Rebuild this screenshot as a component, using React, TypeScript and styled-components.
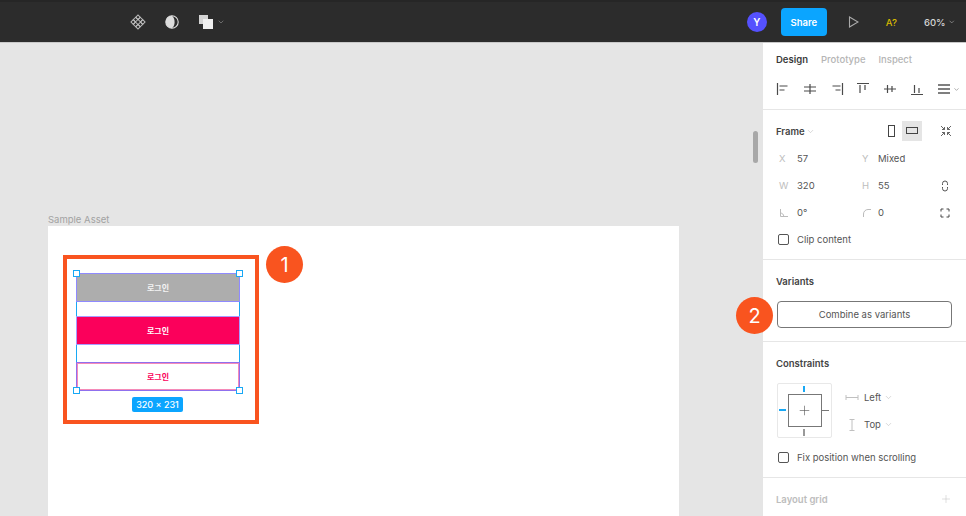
import React from 'react'
import styled, { createGlobalStyle } from 'styled-components'
import { ChevronDown, Plus } from 'lucide-react'

const GlobalStyle = createGlobalStyle`
  html, body {
    margin: 0;
    padding: 0;
    height: 100%;
    overflow: hidden;
    background: #e5e5e5;
  }
  body {
    font-family: Inter, "Liberation Sans", "Noto Sans CJK KR", sans-serif;
    -webkit-font-smoothing: antialiased;
  }
`

const Page = styled.div`
  width: 966px;
  height: 516px;
  display: flex;
  flex-direction: column;
  overflow: hidden;
`

const TopBar = styled.header`
  height: 43px;
  flex: none;
  display: flex;
  align-items: center;
  background: #2c2c2c;
  border-top: 2px solid #262626;
  border-bottom: 1px solid #c9c9c9;
  box-sizing: border-box;
  color: #e4e4e4;
`

const ToolGroup = styled.div`
  display: flex;
  align-items: center;
  margin-left: 130px;
  gap: 18px;
`

const ToolButton = styled.div`
  display: flex;
  align-items: center;
  gap: 3px;
  height: 16px;
`

const BarRight = styled.div`
  margin-left: auto;
  display: flex;
  align-items: center;
`

const Avatar = styled.div`
  width: 20px;
  height: 20px;
  border-radius: 50%;
  background: #5551ff;
  color: #fff;
  font-size: 10px;
  font-weight: 600;
  display: flex;
  align-items: center;
  justify-content: center;
`

const ShareButton = styled.div`
  width: 46px;
  height: 28px;
  margin-left: 14px;
  border-radius: 4px;
  background: #0ba5ff;
  color: #fff;
  font-size: 9.5px;
  font-weight: 600;
  display: flex;
  align-items: center;
  justify-content: center;
`

const PlayWrap = styled.div`
  margin-left: 20px;
  width: 12px;
  display: flex;
`

const MissingFonts = styled.div`
  margin-left: 27px;
  color: #d6b900;
  font-size: 9.5px;
  font-weight: 500;
`

const Zoom = styled.div`
  margin-left: 27px;
  margin-right: 11px;
  width: 31px;
  display: flex;
  align-items: center;
  gap: 2px;
  font-size: 9.5px;
  font-weight: 500;
  color: #d4d4d4;
`

const Body = styled.div`
  position: relative;
  flex: 1;
  min-height: 0;
  display: flex;
`

const Canvas = styled.main`
  position: relative;
  flex: 1;
  background: #e5e5e5;
  overflow: hidden;
`

const FrameLabel = styled.div`
  position: absolute;
  left: 48px;
  top: 171px;
  font-size: 9.5px;
  color: #a2a2a2;
`

const ArtBoard = styled.div`
  position: absolute;
  left: 48px;
  top: 183px;
  width: 631px;
  height: 300px;
  background: #fff;
`

const Annotation = styled.div`
  position: absolute;
  left: 15px;
  top: 29px;
  width: 196px;
  height: 169px;
  box-sizing: border-box;
  border: 4px solid #f9541f;
`

const Selection = styled.div`
  position: absolute;
  left: 9px;
  top: 14px;
  width: 164px;
  height: 118px;
  box-sizing: border-box;
  border-left: 1px solid #18a8f5;
  border-right: 1px solid #18a8f5;
  display: flex;
  flex-direction: column;
`

const LoginButton = styled.div<{ $bg: string; $fg: string; $gap: number; $line: string; $inner?: string }>`
  flex: none;
  height: 29px;
  margin: 0 -1px ${p => p.$gap}px;
  box-sizing: border-box;
  background: ${p => p.$bg};
  color: ${p => p.$fg};
  border: 1px solid ${p => p.$line};
  box-shadow: inset 0 0 0 1px ${p => p.$inner ?? 'transparent'};
  font-size: 8px;
  font-weight: 700;
  display: flex;
  align-items: center;
  justify-content: center;
`

const Handle = styled.span<{ $x: 'left' | 'right'; $y: 'top' | 'bottom' }>`
  position: absolute;
  ${p => p.$x}: -4px;
  ${p => p.$y}: -3px;
  width: 5px;
  height: 5px;
  background: #fff;
  border: 1px solid #18a8f5;
`

const SizeBadge = styled.div`
  position: absolute;
  left: 65px;
  top: 138px;
  width: 51px;
  height: 15px;
  border-radius: 2px;
  background: #0ba5ff;
  color: #fff;
  font-size: 9px;
  font-weight: 500;
  display: flex;
  align-items: center;
  justify-content: center;
`

const Marker = styled.div<{ $left: number; $top: number }>`
  position: absolute;
  left: ${p => p.$left}px;
  top: ${p => p.$top}px;
  width: 37px;
  height: 37px;
  border-radius: 50%;
  background: #f9541f;
  color: #fff;
  font-size: 20px;
  display: flex;
  align-items: center;
  justify-content: center;
  z-index: 2;
`

const ScrollThumb = styled.div`
  position: absolute;
  left: 753px;
  top: 88px;
  width: 5px;
  height: 32px;
  border-radius: 3px;
  background: #a8a8a8;
`

const Sidebar = styled.aside`
  width: 203px;
  flex: none;
  background: #fff;
  color: #333;
  font-size: 9.5px;
`

const Section = styled.section<{ $height: number }>`
  height: ${p => p.$height}px;
  box-sizing: border-box;
  padding: 0 14px 0 13px;
  border-bottom: 1px solid #e6e6e6;
  &:last-child {
    border-bottom: 0;
  }
`

const Tabs = styled.div`
  display: flex;
  gap: 13px;
  padding-top: 10px;
  height: 13px;
  line-height: 13px;
`

const Tab = styled.span<{ $active?: boolean }>`
  font-weight: ${p => (p.$active ? 600 : 500)};
  color: ${p => (p.$active ? '#3a3a3a' : '#b5b5b5')};
`

const AlignRow = styled.div`
  display: flex;
  align-items: center;
  justify-content: space-between;
  margin-top: 16px;
  margin-right: -8px;
  color: #4a4a4a;
`

const TitleRow = styled.div`
  display: flex;
  align-items: center;
  height: 14px;
  padding-top: 14px;
`

const SectionTitle = styled.span<{ $muted?: boolean }>`
  font-weight: 600;
  color: ${p => (p.$muted ? '#bdbdbd' : '#444')};
`

const OrientGroup = styled.div`
  margin-left: auto;
  margin-right: -4px;
  display: flex;
  align-items: center;
`

const OrientButton = styled.div<{ $active?: boolean; $gap?: number }>`
  width: 20px;
  height: 20px;
  margin-left: ${p => p.$gap ?? 0}px;
  display: flex;
  align-items: center;
  justify-content: center;
  background: ${p => (p.$active ? '#e5e5e5' : 'transparent')};
`

const FieldGrid = styled.div`
  display: grid;
  grid-template-columns: 18px 65px 16px 1fr 12px;
  grid-auto-rows: 27px;
  align-items: center;
  margin: 7px 1px 0 3px;
  color: #555;
`

const FieldLabel = styled.span`
  color: #bdbdbd;
`

const CheckRow = styled.label<{ $top: number }>`
  display: flex;
  align-items: center;
  gap: 8px;
  margin: ${p => p.$top}px 0 0 2px;
  color: #555;
`

const CheckBox = styled.span`
  width: 9px;
  height: 9px;
  border: 1px solid #555;
  border-radius: 2px;
  flex: none;
`

const CombineButton = styled.div`
  height: 27px;
  margin: 13px 0 0 1px;
  box-sizing: border-box;
  border: 1px solid #777;
  border-radius: 4px;
  display: flex;
  align-items: center;
  justify-content: center;
  color: #555;
`

const ConstraintRow = styled.div`
  display: flex;
  margin: 13px 0 0 1px;
`

const ConstraintBox = styled.div`
  position: relative;
  width: 55px;
  height: 55px;
  box-sizing: border-box;
  border: 1px solid #e8e8e8;
  border-radius: 2px;
  display: flex;
  align-items: center;
  justify-content: center;
  flex: none;
  color: #555;
`

const ConstraintInner = styled.div`
  width: 34px;
  height: 33px;
  box-sizing: border-box;
  border: 1px solid #777;
  display: flex;
  align-items: center;
  justify-content: center;
`

const Tick = styled.span<{ $top: number; $left: number; $w: number; $h: number; $color: string }>`
  position: absolute;
  top: ${p => p.$top}px;
  left: ${p => p.$left}px;
  width: ${p => p.$w}px;
  height: ${p => p.$h}px;
  background: ${p => p.$color};
`

const ConstraintOptions = styled.div`
  margin-left: 13px;
  display: grid;
  grid-auto-rows: 27px;
  padding-top: 1px;
  align-items: center;
`

const OptionRow = styled.div`
  display: flex;
  align-items: center;
  color: #555;
  gap: 2px;
`

const OptionIcon = styled.span`
  width: 17px;
  display: flex;
  color: #c0c0c0;
`

const Muted = styled.span<{ $push?: boolean }>`
  display: flex;
  color: #bcbcbc;
  margin-left: ${p => (p.$push ? 'auto' : '1px')};
`

const ArrowDown = () => <ChevronDown size={9} strokeWidth={1.5} />

function Icon({ size = 14, children, color = 'currentColor' }: { size?: number; children: React.ReactNode; color?: string }) {
  return (
    <svg width={size} height={size} viewBox={`0 0 ${size} ${size}`} fill="none" stroke={color} strokeWidth="1">
      {children}
    </svg>
  )
}

const ComponentIcon = () => (
  <Icon size={16}>
    {[[8, 3.2], [3.2, 8], [12.8, 8], [8, 12.8], [5.6, 5.6], [10.4, 5.6], [5.6, 10.4], [10.4, 10.4]].map(([x, y], i) => (
      <rect key={i} x={x - 1.6} y={y - 1.6} width="3.2" height="3.2" transform={`rotate(45 ${x} ${y})`} stroke="#bbb" />
    ))}
  </Icon>
)

const ContrastIcon = () => (
  <Icon size={16}>
    <circle cx="8" cy="8" r="6.2" stroke="#ddd" strokeWidth="1.1" />
    <path d="M8 1.8a6.2 6.2 0 0 0 0 12.4c1.8-1.6 2.6-3.8 2.6-6.2S9.8 3.4 8 1.8z" fill="#ddd" stroke="none" />
  </Icon>
)

const BooleanIcon = () => (
  <Icon size={16}>
    <rect x="1" y="1" width="9" height="9" fill="#d4d4d4" stroke="none" />
    <rect x="5" y="5" width="10" height="10" fill="#efefef" stroke="none" />
  </Icon>
)

const PlayIcon = () => (
  <Icon size={12}>
    <path d="M2.5 1v10L11 6z" stroke="#aaa" strokeWidth="1.1" />
  </Icon>
)

const alignPaths = [
  'M1.5 1v12 M3.5 4h8 M3.5 8h5',
  'M1 5h12 M1 9h12 M7 2v10',
  'M12.5 1v12 M2.5 4h8 M5.5 8h5',
  'M1 1.5h12 M4 3v8 M9 3v5',
  'M1 7h12 M4.5 3v8 M9 4v6',
  'M1 12.5h12 M4.5 3v8 M9 6v5',
]

const AlignIcon = ({ d }: { d: string }) => (
  <Icon>
    <path d={d} strokeWidth="1.2" />
  </Icon>
)

const DistributeIcon = () => (
  <OptionRow>
    <Icon>
      <path d="M1 3h12 M1 7h12 M1 11h12" strokeWidth="1.5" />
    </Icon>
    <ChevronDown size={7} strokeWidth={1.6} />
  </OptionRow>
)

const CollapseIcon = () => (
  <Icon size={12}>
    <path d="M1 1l3.5 3.5 M4.5 2v2.5H2 M11 1L7.5 4.5 M7.5 2v2.5H10 M1 11l3.5-3.5 M2 7.5h2.5V10 M11 11L7.5 7.5 M10 7.5H7.5V10" stroke="#555" strokeWidth=".9" />
  </Icon>
)

const CornerIcon = () => (
  <Icon size={10}>
    <path d="M1.5 1v7.5H9 M1.5 5c2 .2 3 1.3 3.3 3.5" stroke="#bbb" />
  </Icon>
)

const RadiusIcon = () => (
  <Icon size={10}>
    <path d="M1.5 9V6a4.5 4.5 0 0 1 4.5-4.5h3" stroke="#bbb" />
  </Icon>
)

const RatioIcon = () => (
  <Icon size={12}>
    <path d="M3.5 5V3.5a2.5 2.5 0 0 1 5 0V5 M3.5 7v1.5a2.5 2.5 0 0 0 5 0V7" stroke="#555" />
  </Icon>
)

const CornersIcon = () => (
  <Icon size={12}>
    <path d="M2 4.5V2h2.5 M7.5 2H10v2.5 M10 7.5V10H7.5 M4.5 10H2V7.5" stroke="#444" />
  </Icon>
)

const HorizontalIcon = () => (
  <Icon size={14}>
    <path d="M1 4v5 M13 4v5 M1 6.5h12" />
  </Icon>
)

const VerticalIcon = () => (
  <Icon size={14}>
    <path d="M4.5 1.5h5 M4.5 12.5h5 M7 1.5v11" />
  </Icon>
)

export default function App() {
  return (
    <Page>
      <GlobalStyle />
      <TopBar>
        <ToolGroup>
          <ToolButton><ComponentIcon /></ToolButton>
          <ToolButton><ContrastIcon /></ToolButton>
          <ToolButton>
            <BooleanIcon />
            <ChevronDown size={8} strokeWidth={1.5} color="#aaa" />
          </ToolButton>
        </ToolGroup>
        <BarRight>
          <Avatar>Y</Avatar>
          <ShareButton>Share</ShareButton>
          <PlayWrap><PlayIcon /></PlayWrap>
          <MissingFonts>A?</MissingFonts>
          <Zoom>60% <ChevronDown size={8} strokeWidth={1.5} /></Zoom>
        </BarRight>
      </TopBar>
      <Body>
        <Canvas>
          <FrameLabel>Sample Asset</FrameLabel>
          <ArtBoard>
            <Annotation>
              <Selection>
                <LoginButton $bg="#adadad" $fg="#f4f4f4" $line="#8f8aff" $gap={14}>로그인</LoginButton>
                <LoginButton $bg="#fb005b" $fg="#fff" $line="#a79cff" $gap={17}>로그인</LoginButton>
                <LoginButton $bg="#fff" $fg="#fb005b" $line="#8f70ee" $inner="#f58ab8" $gap={0}>로그인</LoginButton>
                <Handle $x="left" $y="top" />
                <Handle $x="right" $y="top" />
                <Handle $x="left" $y="bottom" />
                <Handle $x="right" $y="bottom" />
              </Selection>
              <SizeBadge>320 × 231</SizeBadge>
            </Annotation>
            <Marker $left={218} $top={20}>1</Marker>
          </ArtBoard>
          <ScrollThumb />
        </Canvas>
        <Marker $left={736} $top={254}>2</Marker>
        <Sidebar>
          <Section $height={67}>
            <Tabs>
              <Tab $active>Design</Tab>
              <Tab>Prototype</Tab>
              <Tab>Inspect</Tab>
            </Tabs>
            <AlignRow>
              {alignPaths.map(d => <AlignIcon key={d} d={d} />)}
              <DistributeIcon />
            </AlignRow>
          </Section>
          <Section $height={150}>
            <TitleRow>
              <SectionTitle>Frame</SectionTitle>
              <Muted><ArrowDown /></Muted>
              <OrientGroup>
                <OrientButton>
                  <Icon size={12}><rect x="2.5" y="0.5" width="6" height="11" stroke="#444" /></Icon>
                </OrientButton>
                <OrientButton $active>
                  <Icon size={14}><rect x="1.5" y="3.5" width="11" height="6" stroke="#444" /></Icon>
                </OrientButton>
                <OrientButton $gap={14}><CollapseIcon /></OrientButton>
              </OrientGroup>
            </TitleRow>
            <FieldGrid>
              <FieldLabel>X</FieldLabel><span>57</span>
              <FieldLabel>Y</FieldLabel><span>Mixed</span><span />
              <FieldLabel>W</FieldLabel><span>320</span>
              <FieldLabel>H</FieldLabel><span>55</span><RatioIcon />
              <CornerIcon /><span>0°</span>
              <RadiusIcon /><span>0</span><CornersIcon />
            </FieldGrid>
            <CheckRow $top={8}>
              <CheckBox />
              Clip content
            </CheckRow>
          </Section>
          <Section $height={82}>
            <TitleRow>
              <SectionTitle>Variants</SectionTitle>
            </TitleRow>
            <CombineButton>Combine as variants</CombineButton>
          </Section>
          <Section $height={136}>
            <TitleRow>
              <SectionTitle>Constraints</SectionTitle>
            </TitleRow>
            <ConstraintRow>
              <ConstraintBox>
                <ConstraintInner>
                  <Plus size={15} strokeWidth={1} />
                </ConstraintInner>
                <Tick $top={2} $left={25} $w={2} $h={6} $color="#18a8f5" />
                <Tick $top={45} $left={25} $w={2} $h={7} $color="#999" />
                <Tick $top={25} $left={1} $w={7} $h={2} $color="#18a8f5" />
                <Tick $top={26} $left={44} $w={7} $h={1} $color="#777" />
              </ConstraintBox>
              <ConstraintOptions>
                <OptionRow>
                  <OptionIcon><HorizontalIcon /></OptionIcon>
                  Left <Muted><ArrowDown /></Muted>
                </OptionRow>
                <OptionRow>
                  <OptionIcon><VerticalIcon /></OptionIcon>
                  Top <Muted><ArrowDown /></Muted>
                </OptionRow>
              </ConstraintOptions>
            </ConstraintRow>
            <CheckRow $top={14}>
              <CheckBox />
              Fix position when scrolling
            </CheckRow>
          </Section>
          <Section $height={38}>
            <TitleRow>
              <SectionTitle $muted>Layout grid</SectionTitle>
              <Muted $push><Plus size={12} strokeWidth={1} /></Muted>
            </TitleRow>
          </Section>
        </Sidebar>
      </Body>
    </Page>
  )
}
